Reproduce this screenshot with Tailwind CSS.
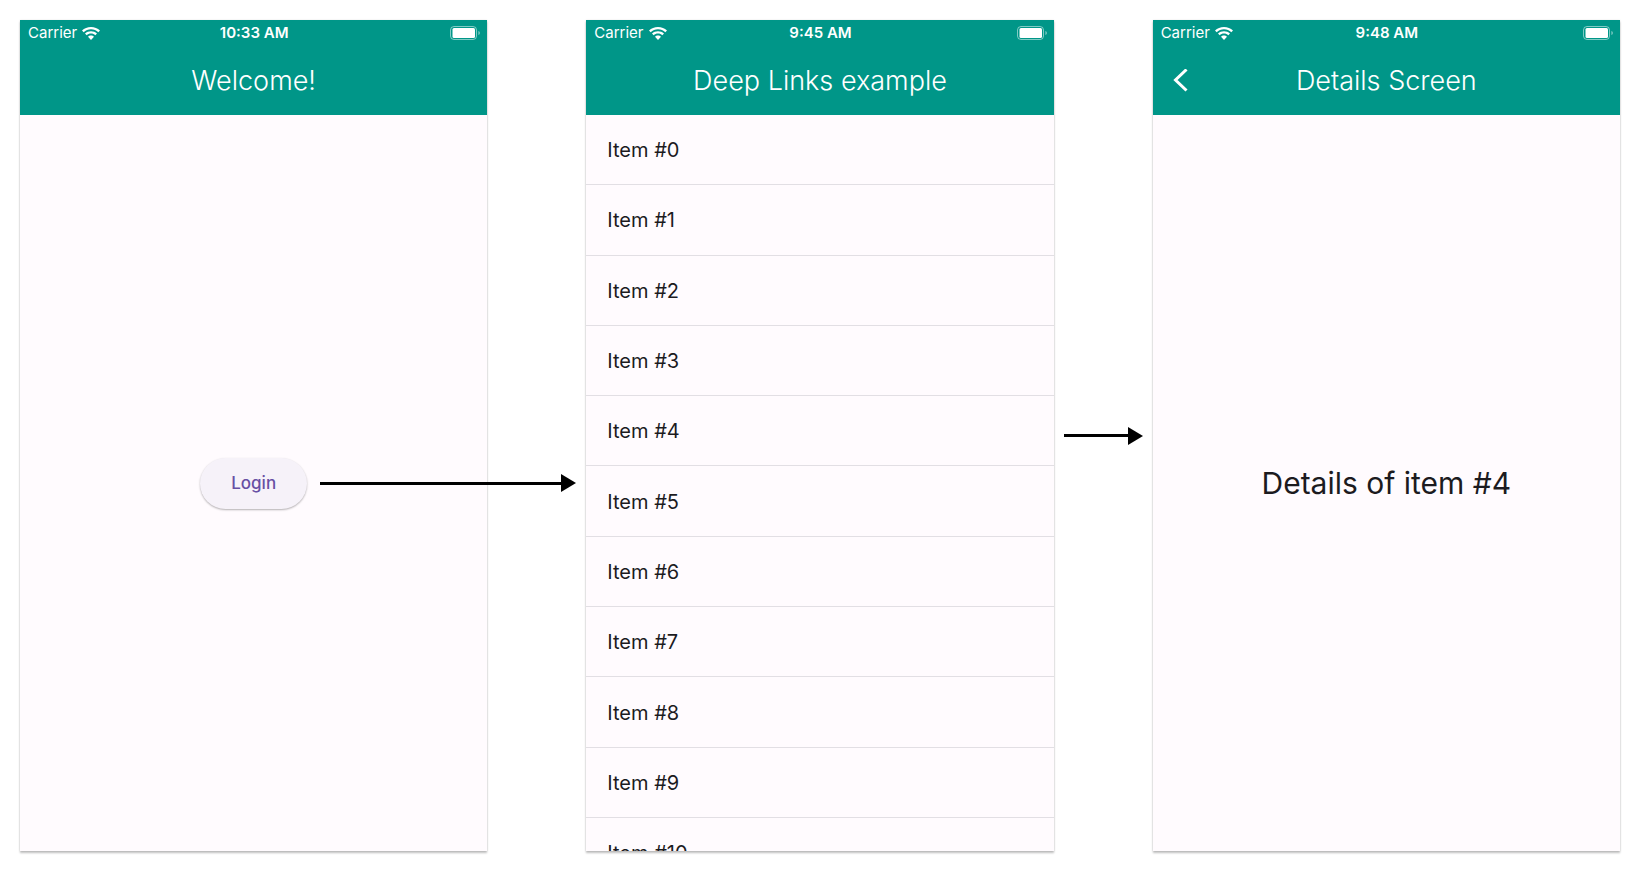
<!DOCTYPE html>
<html lang="en">
<head>
<meta charset="utf-8">
<meta name="viewport" content="width=device-width, initial-scale=1">
<title>Deep Links example</title>
<script src="https://cdn.jsdelivr.net/npm/@tailwindcss/browser@4"></script>
</head>
<body class="bg-white font-['Inter',sans-serif] text-[#1c1b1f]">
<svg class="hidden" aria-hidden="true">
  <symbol id="wifi" viewBox="0 0 18 13">
    <path fill="#fff" d="M9 0C5.500 0 2.300 1.300 0 3.500L1.700 5.200C3.600 3.400 6.200 2.300 9 2.300S14.400 3.400 16.300 5.200L18 3.500C15.700 1.300 12.500 0 9 0ZM9 4.200C6.700 4.200 4.600 5.100 3 6.500L4.700 8.200C5.800 7.200 7.300 6.500 9 6.500S12.200 7.200 13.300 8.200L15 6.500C13.400 5.100 11.300 4.200 9 4.200ZM9 8.400C7.800 8.400 6.800 8.800 6 9.800L9 12.900L12 9.800C11.200 8.800 10.200 8.400 9 8.400Z"/>
  </symbol>
  <symbol id="battery" viewBox="0 0 30 14">
    <rect x="0.500" y="0.500" width="26" height="13" rx="3.500" fill="none" stroke="#fff" stroke-opacity=".5"/>
    <rect x="2.500" y="2" width="22.500" height="10" rx="1.500" fill="#fff"/>
    <path d="M28.500 5v4c.7-.3 1.200-1.100 1.200-2s-.5-1.700-1.200-2Z" fill="#fff" fill-opacity=".6"/>
  </symbol>
  <symbol id="head" viewBox="0 0 15 18"><path d="M0 0L15 9L0 18Z"/></symbol>
</svg>

<main class="flex min-h-screen items-stretch px-5 pt-5 pb-[19px]">
  <!-- Login screen -->
  <section class="flex min-w-0 flex-1 flex-col bg-[#fffbfe] shadow-[0_2px_2px_rgba(0,0,0,0.25),0_0_2px_rgba(0,0,0,0.1)]">
    <header class="bg-[#009688] text-white">
      <div class="grid h-[26px] grid-cols-[1fr_auto_1fr] items-center pr-[7px] pl-2 text-[15px] leading-5">
        <span class="flex items-center gap-[5px]">Carrier <svg class="h-[13px] w-[18px]"><use href="#wifi"/></svg></span>
        <time class="font-semibold">10:33 AM</time>
        <svg class="h-[14px] w-[30px] justify-self-end"><use href="#battery"/></svg>
      </div>
      <div class="flex h-[69px] items-center justify-center"><h1 class="text-[27px] leading-8 font-light">Welcome!</h1></div>
    </header>
    <div class="grid flex-1 grid-cols-[1fr_auto_1fr] items-center">
      <button type="button" class="col-start-2 h-[51px] rounded-full bg-[#f6f2f9] px-[31px] text-[17px] leading-6 font-medium text-[#6750a4] shadow-[0_1px_2px_rgba(0,0,0,0.3)]">Login</button>
      <div class="relative -mr-[89px] ml-[13px] flex items-center">
        <span class="h-[3px] flex-1 bg-black"></span>
        <svg class="h-[18px] w-[15px]"><use href="#head"/></svg>
      </div>
    </div>
  </section>

  <div class="w-[99px] shrink-0"></div>

  <!-- Item list screen -->
  <section class="flex min-w-0 flex-1 flex-col bg-[#fffbfe] shadow-[0_2px_2px_rgba(0,0,0,0.25),0_0_2px_rgba(0,0,0,0.1)]">
    <header class="bg-[#009688] text-white">
      <div class="grid h-[26px] grid-cols-[1fr_auto_1fr] items-center pr-[7px] pl-2 text-[15px] leading-5">
        <span class="flex items-center gap-[5px]">Carrier <svg class="h-[13px] w-[18px]"><use href="#wifi"/></svg></span>
        <time class="font-semibold">9:45 AM</time>
        <svg class="h-[14px] w-[30px] justify-self-end"><use href="#battery"/></svg>
      </div>
      <div class="flex h-[69px] items-center justify-center"><h1 class="text-[27px] leading-8 font-light">Deep Links example</h1></div>
    </header>
    <ul class="flex flex-1 flex-col text-[20px] leading-7">
      <li class="flex flex-1 items-center border-b border-[#e2dfe4] px-[21px] pt-px">Item #0</li>
      <li class="flex flex-1 items-center border-b border-[#e2dfe4] px-[21px] pt-px">Item #1</li>
      <li class="flex flex-1 items-center border-b border-[#e2dfe4] px-[21px] pt-px">Item #2</li>
      <li class="flex flex-1 items-center border-b border-[#e2dfe4] px-[21px] pt-px">Item #3</li>
      <li class="flex flex-1 items-center border-b border-[#e2dfe4] px-[21px] pt-px">Item #4</li>
      <li class="flex flex-1 items-center border-b border-[#e2dfe4] px-[21px] pt-px">Item #5</li>
      <li class="flex flex-1 items-center border-b border-[#e2dfe4] px-[21px] pt-px">Item #6</li>
      <li class="flex flex-1 items-center border-b border-[#e2dfe4] px-[21px] pt-px">Item #7</li>
      <li class="flex flex-1 items-center border-b border-[#e2dfe4] px-[21px] pt-px">Item #8</li>
      <li class="flex flex-1 items-center border-b border-[#e2dfe4] px-[21px] pt-px">Item #9</li>
      <!-- the list scrolls on: its next row shows only in part -->
      <li class="h-[33px] overflow-hidden px-[21px] pt-[21px]">Item #10</li>
    </ul>
  </section>

  <div class="flex w-[99px] shrink-0 items-center px-2.5">
    <span class="h-[3px] flex-1 bg-black"></span>
    <svg class="h-[18px] w-[15px]"><use href="#head"/></svg>
  </div>

  <!-- Details screen -->
  <section class="flex min-w-0 flex-1 flex-col bg-[#fffbfe] shadow-[0_2px_2px_rgba(0,0,0,0.25),0_0_2px_rgba(0,0,0,0.1)]">
    <header class="bg-[#009688] text-white">
      <div class="grid h-[26px] grid-cols-[1fr_auto_1fr] items-center pr-[7px] pl-2 text-[15px] leading-5">
        <span class="flex items-center gap-[5px]">Carrier <svg class="h-[13px] w-[18px]"><use href="#wifi"/></svg></span>
        <time class="font-semibold">9:48 AM</time>
        <svg class="h-[14px] w-[30px] justify-self-end"><use href="#battery"/></svg>
      </div>
      <div class="grid h-[69px] grid-cols-[1fr_auto_1fr] items-center px-5">
        <button type="button" aria-label="Back" class="justify-self-start">
          <svg class="h-6 w-[15px]" viewBox="0 0 15 24" fill="none" stroke="#fff" stroke-width="3"><path d="M13.500 0.500L2.500 11L13.500 21.500"/></svg>
        </button>
        <h1 class="text-[27px] leading-8 font-light">Details Screen</h1>
      </div>
    </header>
    <div class="flex flex-1 items-center justify-center"><p class="text-[30px] leading-9">Details of item #4</p></div>
  </section>
</main>
</body>
</html>
